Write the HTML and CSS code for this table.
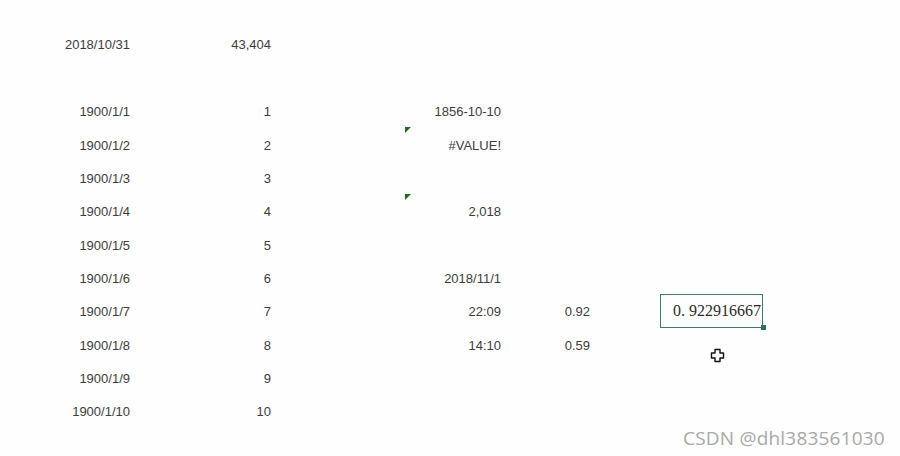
FILE: index.html
```html
<!DOCTYPE html>
<html>
<head>
<meta charset="utf-8">
<link rel="stylesheet" href="styles.css">
</head>
<body>
<div class="sheet">
  <div class="row"><div class="cell">2018/10/31</div><div class="cell">43,404</div><div class="cell"></div><div class="cell"></div><div class="cell"></div><div class="cell"></div><div class="cell"></div></div>
  <div class="row"><div class="cell"></div><div class="cell"></div><div class="cell"></div><div class="cell"></div><div class="cell"></div><div class="cell"></div><div class="cell"></div></div>
  <div class="row"><div class="cell">1900/1/1</div><div class="cell">1</div><div class="cell"></div><div class="cell">1856-10-10</div><div class="cell"></div><div class="cell"></div><div class="cell"></div></div>
  <div class="row"><div class="cell">1900/1/2</div><div class="cell">2</div><div class="cell"></div><div class="cell flag">#VALUE!</div><div class="cell"></div><div class="cell"></div><div class="cell"></div></div>
  <div class="row"><div class="cell">1900/1/3</div><div class="cell">3</div><div class="cell"></div><div class="cell"></div><div class="cell"></div><div class="cell"></div><div class="cell"></div></div>
  <div class="row"><div class="cell">1900/1/4</div><div class="cell">4</div><div class="cell"></div><div class="cell flag">2,018</div><div class="cell"></div><div class="cell"></div><div class="cell"></div></div>
  <div class="row"><div class="cell">1900/1/5</div><div class="cell">5</div><div class="cell"></div><div class="cell"></div><div class="cell"></div><div class="cell"></div><div class="cell"></div></div>
  <div class="row"><div class="cell">1900/1/6</div><div class="cell">6</div><div class="cell"></div><div class="cell">2018/11/1</div><div class="cell"></div><div class="cell"></div><div class="cell"></div></div>
  <div class="row"><div class="cell">1900/1/7</div><div class="cell">7</div><div class="cell"></div><div class="cell">22:09</div><div class="cell">0.92</div><div class="cell"></div><div class="cell selected">0. 922916667<span class="handle"></span></div></div>
  <div class="row"><div class="cell">1900/1/8</div><div class="cell">8</div><div class="cell"></div><div class="cell">14:10</div><div class="cell">0.59</div><div class="cell"></div><div class="cell cursor-cell"><svg class="cursor" width="15" height="15" viewBox="0 0 15 15"><path d="M5 1.5h5v3.5h3.5v5h-3.5v3.5h-5v-3.5h-3.5v-5h3.5z" fill="#fff" stroke="#111" stroke-width="1.4" stroke-linejoin="round"/></svg></div></div>
  <div class="row"><div class="cell">1900/1/9</div><div class="cell">9</div><div class="cell"></div><div class="cell"></div><div class="cell"></div><div class="cell"></div><div class="cell"></div></div>
  <div class="row"><div class="cell">1900/1/10</div><div class="cell">10</div><div class="cell"></div><div class="cell"></div><div class="cell"></div><div class="cell"></div><div class="cell"></div></div>
</div>
<div class="watermark">CSDN @dhl383561030</div>
</body>
</html>
```

FILE: styles.css
```css
html, body {
  margin: 0;
  padding: 0;
  background: #fefefe;
  width: 900px;
  height: 456px;
  overflow: hidden;
  position: relative;
}
.sheet {
  padding-top: 28.3px;
  display: flex;
  flex-direction: column;
  font-family: "Liberation Sans", Arial, sans-serif;
  font-size: 13px;
  color: #3c3c3c;
}
.row {
  display: grid;
  grid-template-columns: 134px 141px 129px 101px 89px 66px 103px;
  height: 33.36px;
}
.cell {
  position: relative;
  display: flex;
  align-items: center;
  justify-content: flex-end;
  padding-right: 4px;
}
.flag::before {
  content: "";
  position: absolute;
  left: 1px;
  top: -1px;
  width: 0;
  height: 0;
  border-top: 6px solid #1f6a1f;
  border-right: 6px solid transparent;
}
.selected {
  border: 1.5px solid #3d7a68;
  box-sizing: border-box;
  margin-top: -1px;
  margin-bottom: 1px;
  font-family: "Liberation Serif", "Times New Roman", serif;
  font-size: 16px;
  color: #2a2a2a;
  padding-right: 1px;
  white-space: pre;
}
.handle {
  position: absolute;
  right: -3.5px;
  bottom: -3.5px;
  width: 5px;
  height: 5px;
  background: #2f6e5c;
}
.cursor-cell {
  justify-content: flex-start;
}
.cursor {
  position: absolute;
  left: 50px;
  top: 19px;
}
.watermark {
  position: absolute;
  left: 683px;
  top: 425px;
  font-family: "Open Sans", "Noto Sans", sans-serif;
  font-size: 19px;
  color: #a8a8a8;
  letter-spacing: 0.2px;
}
```
